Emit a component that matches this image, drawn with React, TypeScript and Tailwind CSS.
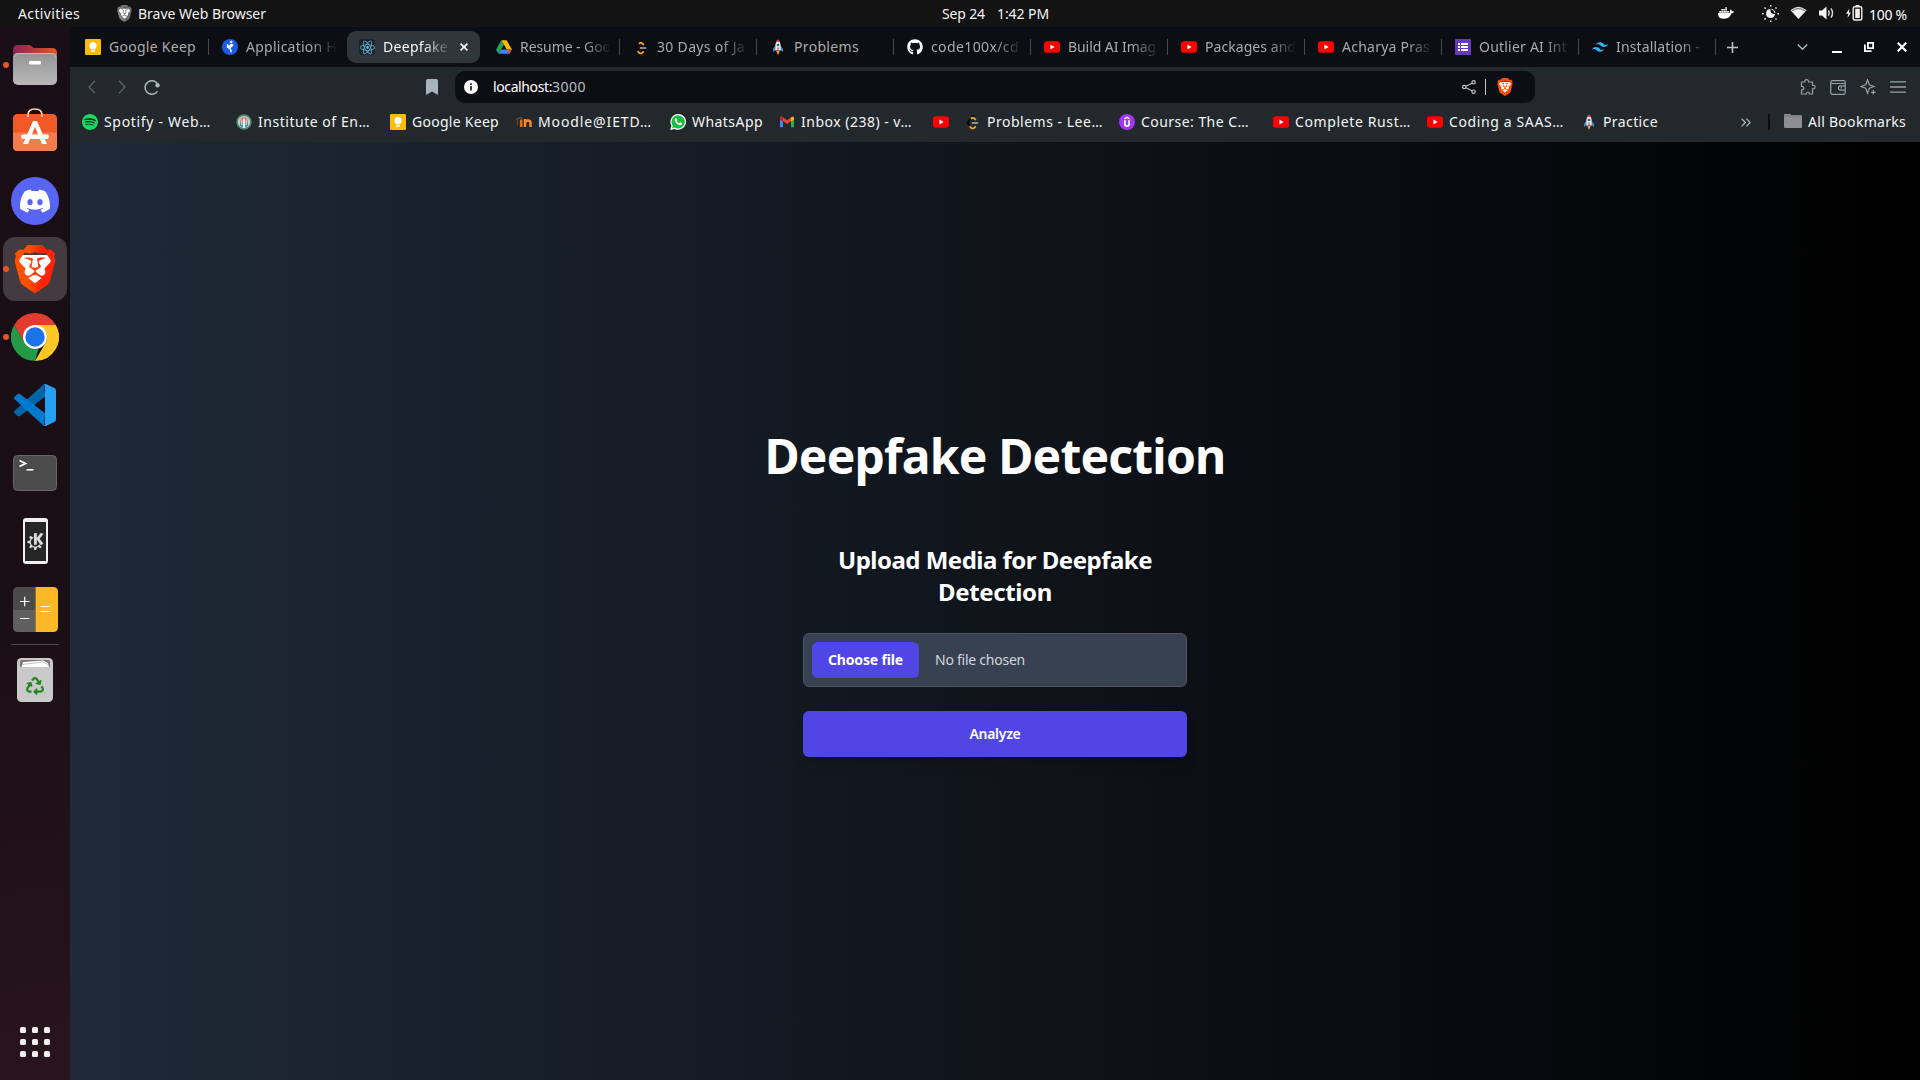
import { useLayoutEffect, useRef, type ReactNode } from "react";
import { FaGithub, FaRecycle } from "react-icons/fa";
import { SiBrave, SiDiscord, SiDocker, SiKde, SiReact, SiSpotify, SiTailwindcss, SiWhatsapp } from "react-icons/si";

/* Text whose tracking is adjusted so that it takes up exactly `w` pixels. */
function Fit({ w, children, className = "" }: { w: number; children: string; className?: string }) {
  const ref = useRef<HTMLSpanElement>(null);
  useLayoutEffect(() => {
    const el = ref.current;
    if (!el) return;
    el.style.letterSpacing = "0px";
    const natural = el.getBoundingClientRect().width;
    el.style.letterSpacing = `${(w - natural) / children.length}px`;
  }, [w, children]);
  return (
    <span ref={ref} className={`inline-block whitespace-pre ${className}`}>
      {children}
    </span>
  );
}

/* ---------- small site icons ---------- */
const Keep = () => (
  <svg width="16" height="16" viewBox="0 0 16 16">
    <rect width="16" height="16" rx="1.2" fill="#fbbc04" />
    <circle cx="8" cy="6.7" r="3.6" fill="#fff" />
    <path d="M6 8.5h4v1.8H6zM6 11.3h4v1.4H6z" fill="#fff" />
  </svg>
);
const Runner = () => (
  <svg width="16" height="16" viewBox="0 0 16 16">
    <circle cx="8" cy="8" r="8" fill="#1d5ce6" />
    <circle cx="9.3" cy="3" r="1.2" fill="#fff" />
    <path d="M9.800 5.200 6 8.300q2.800 1 3.200 5M5.600 5.200v3.600M11.200 5.500 8 8.600" fill="none" stroke="#fff" strokeWidth="1.500" />
  </svg>
);
const ReactTile = () => (
  <span className="flex size-4 items-center justify-center rounded-xs bg-[#20232a]">
    <SiReact className="size-[15px] text-[#58c4e0]" />
  </span>
);
const Drive = () => (
  <svg width="16" height="16" viewBox="0 0 16 16">
    <path d="M5.4 1.3 0 10.8l2.6 4L8 5.5z" fill="#1ea362" />
    <path d="M5.4 1.3h5.2L16 10.5h-5.2z" fill="#ffba00" />
    <path d="M5.3 10.5H16l-2.6 4.3H2.6z" fill="#4285f4" />
    <path d="m11 10.6 5 0-2.6 4.2z" fill="#ea4335" />
  </svg>
);
const Leet = () => (
  <svg width="16" height="16" viewBox="0 0 16 16" fill="none">
    <path d="M9 1 4 6.500q-1.800 2-.3 4.200l2 2" stroke="#050505" strokeWidth="1.700" />
    <path d="m5.800 4.600 1.400-.8q1.200-.2 2.300.9l1.300 1.300" stroke="#f5a31c" strokeWidth="1.800" />
    <path d="m4.600 12.200 1.700 1.700q1.400 1 2.900 0l1.600-1.500" stroke="#f5a31c" strokeWidth="1.800" />
    <path d="M6.800 9h6.400" stroke="#b3b3b3" strokeWidth="1.500" />
  </svg>
);
const Rocket = () => (
  <svg width="16" height="16" viewBox="0 0 16 16">
    <path d="M5.2 7 3 9.8V13l2.6-1.8zM10.8 7 13 9.8V13l-2.6-1.8z" fill="#3b88c3" />
    <path d="M8 .8C5.4 3 5 6 5.3 11.6h5.4C11 6 10.600 3 8 .8z" fill="#e4ebf0" />
    <path d="M8 .6c-1 .8-1.500 1.500-1.900 2.500h3.800C9.500 2.100 9 1.400 8 .6z" fill="#c8414b" />
    <circle cx="8" cy="6" r="1.300" fill="#3b5f80" />
    <path d="M7.400 8.500h1.200v4H7.400z" fill="#c8414b" />
    <path d="M6.300 12h3.400L8 16z" fill="#ffa21a" />
  </svg>
);
const YouTube = () => (
  <svg width="16" height="16" viewBox="0 0 16 16">
    <rect y="2.300" width="16" height="11.400" rx="2.800" fill="#f00" />
    <path d="M6.400 5.600v4.800L10.600 8z" fill="#fff" />
  </svg>
);
const Forms = () => (
  <svg width="16" height="16" viewBox="0 0 16 16">
    <rect width="16" height="16" rx=".8" fill="#673ab7" />
    <path d="M3 4h2v2H3zM6 4h7v2H6zM3 7h2v2H3zM6 7h7v2H6zM3 10h2v2H3zM6 10h7v2H6z" fill="#fff" />
  </svg>
);
const Crest = () => (
  <svg width="16" height="16" viewBox="0 0 16 16">
    <circle cx="8" cy="8" r="6.900" fill="#c9d3cd" stroke="#4f8a6c" strokeWidth="1.600" />
    <path d="M4.300 6.500q.4-3.300 3.700-3.300t3.700 3.300V9H4.300z" fill="#d2745f" />
    <path d="M4 8.500h8v3.300l-1.500 1.200h-5L4 11.800z" fill="#4d92b5" />
    <path d="M7.100 4.500h1.800v9H7.100z" fill="#fff" />
    <path d="M5.300 5.500h.9v5.500h-.9zM9.800 5.500h.9v5.500h-.9z" fill="#f5e9e4" />
  </svg>
);
const Moodle = () => (
  <svg width="16" height="16" viewBox="0 0 16 16" fill="none">
    <path d="M0 5.500 4 3.500l2.500 1" stroke="#4e4e4e" strokeWidth="1.500" />
    <path d="M1.500 6v5.500" stroke="#6a3d1c" strokeWidth="1.200" />
    <path d="M5.200 13V5.500" stroke="#d96f1a" strokeWidth="2.600" />
    <path d="M9 13V5M9.500 8.500q.3-2 2.500-2t2.500 2V13" stroke="#f7882f" strokeWidth="2.500" />
  </svg>
);
const Gmail = () => (
  <svg width="16" height="16" viewBox="0 0 16 16">
    <path d="M1 4v9.300h3V7z" fill="#4285f4" />
    <path d="M15 4v9.300h-3V7z" fill="#34a853" />
    <path d="M1 3.800C1 2.300 2.600 2.200 3.500 2.900L8 6.300l4.500-3.400v3.800L8 10 3.500 6.700 1 5z" fill="#ea4335" />
    <path d="M12 3.300c1-.9 3-.9 3 .9v1.300l-3 2.200z" fill="#fbbc04" />
    <path d="M1 4.200v1.300l3 2.200V3.600C3 2.400 1 2.500 1 4.200z" fill="#c5221f" />
  </svg>
);
/* White bubble, green disc and white handset. */
const WhatsApp = () => (
  <svg width="16" height="16" viewBox="0 0 16 16">
    <path d="M8.200 0A7.900 7.900 0 1 1 4.500 14.900L.2 16l1.200-4.200A7.900 7.900 0 0 1 8.200 0z" fill="#fff" />
    <path d="M8.200 1.300a6.600 6.600 0 1 1-3.500 12.200l-2.600.7.700-2.500A6.600 6.600 0 0 1 8.200 1.300z" fill="#15bf3f" />
    <path d="M5.500 4.300q.8-.5 1.200.4l.5 1.200q0 .4-.6 1 .9 1.700 2.600 2.400l.8-.9q.3-.2.600 0l1.400.7q.3.3 0 1-.6 1.300-2.200 1.100Q6.100 10.300 4.800 7q-.5-1.600.7-2.700z" fill="#fff" />
  </svg>
);
const Spotify = () => (
  <span className="flex size-4 items-center justify-center rounded-full bg-[#191c1f]">
    <SiSpotify className="size-4 text-[#1ed760]" />
  </span>
);
const Udemy = () => (
  <svg width="16" height="16" viewBox="0 0 16 16" fill="none">
    <circle cx="8" cy="8" r="8" fill="#a435f0" />
    <path d="M5.400 4.800 8 3.300l2.600 1.500" stroke="#fff" strokeWidth="1.400" />
    <path d="M5.900 6.300V10q0 2.100 2.100 2.100T10.100 10V6.300" stroke="#fff" strokeWidth="1.700" />
  </svg>
);
const BraveLogo = ({ size, id, from = "#ff5000", to = "#ff2405" }: { size: number; id: string; from?: string; to?: string }) => (
  <svg width={size} height={size} viewBox="0 0 24 24">
    <defs>
      <linearGradient id={id}>
        <stop offset=".35" stopColor={from} />
        <stop offset=".65" stopColor={to} />
      </linearGradient>
    </defs>
    <path d="M5 5h14l1.500 3-4 10L12 21l-4.500-3-4-10z" fill="#fff" />
    <SiBrave size={24} fill={`url(#${id})`} />
  </svg>
);

/* ---------- top panel ---------- */
function TopBar() {
  return (
    <header className="grid h-[27px] shrink-0 grid-cols-[942px_1fr_202px] items-center bg-[#131313] text-[14px] text-[#f2f2f2]">
      <div className="flex items-center pl-[18px]">
        <Fit w={62}>Activities</Fit>
        <span className="ml-[36px] mr-[5px] flex size-[17px] items-center justify-center">
          <BraveLogo size={17} id="bravePanel" from="#7d7d7d" to="#6a6a6a" />
        </span>
        <Fit w={128}>Brave Web Browser</Fit>
      </div>
      <div className="flex gap-[12px] pb-px leading-[25px]">
        <Fit w={43}>Sep 24</Fit>
        <Fit w={52}>1:42 PM</Fit>
      </div>
      <div className="flex items-center pb-px text-white">
        <SiDocker className="size-[16px]" />
        <svg className="ml-[28px]" width="17" height="17" viewBox="0 0 17 17" fill="#eee">
          <path d="M8.500 4A4.500 4.500 0 1 0 13 9 4 4 0 0 1 8.500 4z" />
          <path d="M9.500 4.100a4.600 4.600 0 0 1 3.500 4" fill="none" stroke="#eee" />
          <path d="M8 0h1.500v1.600H8zM8 15.400h1.500V17H8zM0 8h1.600v1.500H0zM15.400 8H17v1.500h-1.600zM2 3l1-1 1.200 1.200-1 1zM13 3l1-1 1 1-1.100 1.200zM2 14l1.200-1.200 1 1L3 15zM13 14l1-1.100L15 14l-1 1z" />
        </svg>
        <svg className="ml-[11px]" width="17" height="14" viewBox="0 0 17 14">
          <path d="M.5 4.200Q8.500-2.800 16.500 4.200L8.500 13z" fill="#f2f2f2" />
          <path d="M1.500 4.200q7-5 14 0l-1 1.100q-6-4-12 0z" fill="#8a8a8a" />
        </svg>
        <svg className="ml-[12px]" width="16" height="14" viewBox="0 0 16 14">
          <path d="M0 4.500h3L7.500.5v13L3 9.500H0z" fill="#f2f2f2" />
          <path d="M9.500 4.300q1.600 2.700 0 5.400M12 2.300q3 4.700 0 9.400" fill="none" stroke="#ddd" strokeWidth="1.400" />
        </svg>
        <svg className="ml-[11px]" width="17" height="16" viewBox="0 0 17 16">
          <path d="M3.500 3.500 0 8.700h2.300L1.500 13 5 7.500H2.800z" fill="#f2f2f2" />
          <rect x="7.200" y="1.700" width="8.600" height="13.300" rx="1.500" fill="none" stroke="#f2f2f2" strokeWidth="1.400" />
          <path d="M9.500 0h4v2h-4zM9.200 3.700h4.600V13H9.200z" fill="#f2f2f2" />
        </svg>
        <Fit w={38} className="ml-[6px] pt-[2px]">100 %</Fit>
      </div>
    </header>
  );
}

/* ---------- dock ---------- */
function DockItem({ children, active, running }: { children: ReactNode; active?: boolean; running?: boolean }) {
  return (
    <div className="relative flex h-[68px] w-[70px] items-center justify-center">
      {active && <span className="absolute inset-x-[3px] inset-y-[2px] rounded-xl bg-[#433b40]" />}
      {running && <span className="absolute left-[3px] top-[31px] size-[6px] rounded-full bg-[#e95420]" />}
      <span className="relative">{children}</span>
    </div>
  );
}

function Dock() {
  return (
    <aside className="flex w-[70px] shrink-0 flex-col bg-[linear-gradient(170deg,#190e15_0%,#1a0f15_55%,#28141d_100%)] pt-[4px]">
      <DockItem running>
        <svg width="44" height="40" viewBox="0 0 44 40">
          <defs>
            <linearGradient id="folder"><stop stopColor="#7c2a57" /><stop offset="1" stopColor="#e95420" /></linearGradient>
            <linearGradient id="folderFront" x2="0" y2="1"><stop stopColor="#949494" /><stop offset="1" stopColor="#b8b8b8" /></linearGradient>
          </defs>
          <path d="M0 5q0-5 5-5h11q2 0 3 1.500T22 3h17q5 0 5 5v12H0z" fill="url(#folder)" />
          <rect y="8" width="44" height="32" rx="5" fill="url(#folderFront)" />
          <path d="M1 12q0-3.500 4-3.500h34q4 0 4 3.500" fill="none" stroke="#c9c9c9" strokeWidth=".8" />
          <rect x="16" y="16" width="12" height="3.500" rx="1.200" fill="#fff" />
        </svg>
      </DockItem>
      <DockItem>
        <svg className="mb-[7px]" width="44" height="43" viewBox="0 0 44 43">
          <rect y="6" width="44" height="37" rx="4.500" fill="#f15a24" />
          <path d="M0 24.500h44v14q0 4.500-4.500 4.500h-35Q0 43 0 38.500z" fill="#f47b4b" />
          <path d="M15 9V7q0-6 7-6t7 6v2" fill="none" stroke="#f6d9ae" strokeWidth="1.700" />
          <path d="M20 13h4l10 23h-5l-7-17-7 17h-5z" fill="#fff" />
          <rect x="8" y="26.500" width="28" height="4.500" rx="2.200" fill="#fff" />
        </svg>
      </DockItem>
      <DockItem>
        <span className="flex size-12 items-center justify-center rounded-full bg-[#5865f2]">
          <SiDiscord className="size-[30px] text-white" />
        </span>
      </DockItem>
      <DockItem active running><BraveLogo size={48} id="braveDock" /></DockItem>
      <DockItem running>
        <svg width="48" height="48" viewBox="0 0 48 48">
          <path d="M3.200 12A24 24 0 0 1 44.800 12H24L13.600 30z" fill="#e33b2e" />
          <path d="M3.200 12 13.600 30A12 12 0 0 0 24 36h3.500l-3.500 12A24 24 0 0 1 3.200 12z" fill="#249a47" />
          <path d="M44.800 12A24 24 0 0 1 24 48L34.400 30A12 12 0 0 0 34.400 18L24 12z" fill="#fcc727" />
          <circle cx="24" cy="24" r="12" fill="#fff" />
          <circle cx="24" cy="24" r="9.700" fill="#1a73e8" />
        </svg>
      </DockItem>
      <DockItem>
        <svg width="42" height="42" viewBox="0 0 42 42">
          <path d="M31 13 6 32q-1.200.8-2.300 0L.6 29.200q-1-1.200 0-2.400L30 0z" fill="#0065a9" />
          <path d="M31 29 6 10q-1.200-.8-2.300 0L.6 12.800q-1 1.200 0 2.400L30 42z" fill="#007acc" />
          <path d="M31 13v16l-10.500-8z" fill="#1b0f16" />
          <path d="M30 0q.8-.4 1.800 0l8.500 4q1.700.8 1.700 2.500v29q0 1.700-1.700 2.500l-8.500 4q-1 .4-1.800 0l1-2V2z" fill="#23a0f3" />
        </svg>
      </DockItem>
      <DockItem>
        <svg width="44" height="36" viewBox="0 0 44 36">
          <rect x=".5" y=".5" width="43" height="35" rx="4" fill="#4b4b4b" stroke="#666" />
          <path d="m6.500 5.500 6 3-6 3" fill="none" stroke="#fff" strokeWidth="1.700" />
          <path d="M13.500 14.800h7" stroke="#fff" strokeWidth="1.600" />
        </svg>
      </DockItem>
      <DockItem>
        <span className="flex h-[46px] w-[25px] items-center justify-center rounded-[3px] bg-[#f1f1f1]">
          <span className="flex h-[39px] w-[21px] items-center justify-center bg-[#262626]">
            <SiKde className="size-[17px] text-[#dcdcdc]" />
          </span>
        </span>
      </DockItem>
      <DockItem>
        <svg width="45" height="45" viewBox="0 0 45 45">
          <path d="M22.500 0H5Q0 0 0 5v17.500h22.500z" fill="#4a4a4a" />
          <path d="M0 22.500V40q0 5 5 5h17.500V22.500z" fill="#5f5f5f" />
          <path d="M22.500 0H40q5 0 5 5v35q0 5-5 5H22.500z" fill="#fcb827" />
          <path d="M7 14.500h9.500M11.700 9.700v9.600M7 31.500h9.500M27.500 19.500h10M27.500 24.500h10" stroke="#fff" strokeWidth="1.200" />
        </svg>
      </DockItem>
      <div className="mx-[11px] mt-[1px] h-px bg-[#4c4549]" />
      <div className="flex justify-center pt-[13px]">
        <svg width="36" height="44" viewBox="0 0 36 44">
          <rect width="36" height="44" rx="4.500" fill="#c9c9c9" />
          <path d="M3 9V4q0-2 2-2h26q2 0 2 2v5z" fill="#777" />
          <path d="M4.500 9 6 4l20-1.500L31 5l1 4z" fill="#fff" />
          <path d="M5 6.500 26 4l6 3" fill="none" stroke="#aaa" strokeWidth=".7" />
          <FaRecycle x="9" y="19" size={18} color="#1e8a1e" />
        </svg>
      </div>
      <div className="mb-[23px] ml-[20px] mt-auto grid w-[30px] grid-cols-3 gap-[6px]">
        {Array.from({ length: 9 }, (_, i) => (
          <span key={i} className="size-[6px] rounded-[1.500px] bg-[#f0efef]" />
        ))}
      </div>
    </aside>
  );
}

/* ---------- browser ---------- */
const tabs: { icon: ReactNode; label: string; w: number; active?: boolean }[] = [
  { icon: <Keep />, label: "Google Keep", w: 87 },
  { icon: <Runner />, label: "Application H", w: 91 },
  { icon: <ReactTile />, label: "Deepfake", w: 65, active: true },
  { icon: <Drive />, label: "Resume - Goo", w: 91 },
  { icon: <Leet />, label: "30 Days of Ja", w: 88 },
  { icon: <Rocket />, label: "Problems", w: 65 },
  { icon: <FaGithub className="size-4 text-white" />, label: "code100x/cd", w: 88 },
  { icon: <YouTube />, label: "Build AI Imag", w: 88 },
  { icon: <YouTube />, label: "Packages and", w: 91 },
  { icon: <YouTube />, label: "Acharya Pras", w: 88 },
  { icon: <Forms />, label: "Outlier AI Int", w: 88 },
  { icon: <SiTailwindcss className="size-4 text-[#2cb7f5]" />, label: "Installation -", w: 84 },
];

function TabStrip() {
  return (
    <div className="flex h-10 shrink-0 items-center bg-[#0d0e13] pl-[2px] text-[14px] text-[#a9abad]">
      {tabs.map((t, i) => (
        <div key={t.label} className="flex h-10 w-[137px] shrink-0 items-center">
          {t.active ? (
            <div className="ml-[1px] flex h-8 w-[133px] items-center rounded-[9px] bg-[#2f373c] pl-3 text-[#f5f6f7]">
              {t.icon}
              <div className="ml-[8px] w-[65px] overflow-hidden pb-[2px] [mask-image:linear-gradient(to_right,black_62%,rgba(0,0,0,.15))]">
                <Fit w={t.w}>{t.label}</Fit>
              </div>
              <svg className="ml-[12px]" width="8" height="8" viewBox="0 0 8 8">
                <path d="m.6.600 6.800 6.800M7.400.6.600 7.400" stroke="#fff" strokeWidth="1.600" />
              </svg>
            </div>
          ) : (
            <div className="flex w-full items-center pl-[13px]">
              <span className="w-4 shrink-0">{t.icon}</span>
              <div
                className={`ml-[8px] w-[89px] shrink-0 overflow-hidden pb-[2px] ${t.w > 87 || i === 11 ? "[mask-image:linear-gradient(to_right,black_72%,rgba(0,0,0,.1))]" : ""}`}
              >
                <Fit w={t.w}>{t.label}</Fit>
              </div>
              {i !== 1 && <span className="ml-auto h-4 w-px bg-[#444c51]" />}
            </div>
          )}
        </div>
      ))}
      <div className="flex flex-1 items-center pl-[11px] pr-[13px]">
        <svg width="11" height="11" viewBox="0 0 11 11"><path d="M5.500 0v11M0 5.500h11" stroke="#c3c6c8" strokeWidth="1.500" /></svg>
        <svg className="ml-auto" width="11" height="8" viewBox="0 0 11 8"><path d="m.8 1.500 4.700 4.700 4.700-4.700" fill="none" stroke="#a9b8c0" strokeWidth="1.500" /></svg>
        <span className="ml-[24px] mt-[9px] h-[2px] w-[10px] bg-white" />
        <svg className="ml-[22px]" width="10" height="10" viewBox="0 0 10 10" fill="none" stroke="#fff" strokeWidth="1.800">
          <path d="M3.900.900h5.200v5.200H3.900zM.9 2.500v6.600h6.600" />
        </svg>
        <svg className="ml-[23px]" width="10" height="10" viewBox="0 0 10 10"><path d="m.7.700 8.600 8.600M9.300.700.7 9.300" stroke="#fff" strokeWidth="2.200" /></svg>
      </div>
    </div>
  );
}

function Toolbar() {
  return (
    <div className="flex h-10 shrink-0 items-center bg-[#22282c] pr-[14px]">
      <svg className="ml-[18px]" width="8" height="14" viewBox="0 0 8 14"><path d="M7 .7 1 7l6 6.300" fill="none" stroke="#59636a" strokeWidth="1.300" /></svg>
      <svg className="ml-[22px]" width="8" height="14" viewBox="0 0 8 14"><path d="m1 .7 6 6.300-6 6.300" fill="none" stroke="#59636a" strokeWidth="1.300" /></svg>
      <svg className="ml-[18px]" width="16" height="16" viewBox="0 0 16 16">
        <path d="M13.500 12.300A6.800 6.800 0 1 1 14.200 6" fill="none" stroke="#a9b8c0" strokeWidth="1.500" />
        <circle cx="13.500" cy="6.200" r="2.200" fill="#a9b8c0" />
      </svg>
      <svg className="ml-[266px]" width="12" height="16" viewBox="0 0 12 16"><path d="M0 2q0-2 2-2h8q2 0 2 2v14l-6-3.500L0 16z" fill="#a6b5bd" /></svg>
      <div className="ml-[17px] flex h-8 w-[1080px] items-center rounded-[10px] bg-[#0d0e13]">
        <svg className="ml-[9px]" width="14" height="14" viewBox="0 0 14 14">
          <circle cx="7" cy="7" r="7" fill="#fff" />
          <path d="M6.200 6h1.600v4.500H6.200zM6.200 3.300h1.600v1.600H6.200z" fill="#0d0e13" />
        </svg>
        <div className="ml-[15px] flex pb-[2px] text-[14px]">
          <Fit w={59} className="text-white">localhost:</Fit>
          <Fit w={34} className="text-[#b9bcbf]">3000</Fit>
        </div>
        <svg className="ml-auto" width="14" height="14" viewBox="0 0 14 14" fill="none" stroke="#c0c2c4" strokeWidth="1.200">
          <circle cx="2.300" cy="7" r="1.700" /><circle cx="11.600" cy="2.300" r="1.700" /><circle cx="11.600" cy="11.700" r="1.700" />
          <path d="m4 6.200 6-3M4 7.800l6 3" />
        </svg>
        <span className="ml-[9px] h-4 w-px bg-[#c0c2c4]" />
        <span className="ml-[10px] mr-[21px]"><BraveLogo size={18} id="braveUrl" to="#ff4800" /></span>
      </div>
      <div className="ml-auto flex items-center gap-[14px] text-[#94a3ab]">
        <svg width="16" height="16" viewBox="0 0 16 16" fill="none" stroke="currentColor" strokeWidth="1.200">
          <path d="M1.500 3h3.300q-.3-2.300 1.800-2.300T8.600 3h3.900v3.300q2.500-.4 2.500 1.700t-2.500 1.800V15H9.300q.2-2-1.400-2T6.300 15H1.500v-4q2.300 0 2.300-1.800T1.500 7.300z" />
        </svg>
        <svg width="16" height="15" viewBox="0 0 16 15" fill="none" stroke="currentColor" strokeWidth="1.200">
          <path d="M.7 2.500Q.7.700 2.500.7h11q1.700 0 1.700 1.600v10q0 2-1.700 2h-11q-1.800 0-1.800-1.800zM.7 3.500h14.500M15.200 5.800h-4.500a2.200 2.200 0 0 0 0 4.400h4.500" />
          <path d="M10.500 7.900h1.500" />
        </svg>
        <svg width="16" height="16" viewBox="0 0 16 16" fill="none" stroke="currentColor" strokeWidth="1.200">
          <path d="M7.500.8 9.300 5.700l4.800 1.800-4.800 1.800-1.800 4.900-1.800-4.900L.8 7.500l4.900-1.800z" />
          <path d="M13.300 11v4.500M11 13.300h4.500" />
        </svg>
        <svg width="16" height="12" viewBox="0 0 16 12"><path d="M0 .8h16M0 6h16M0 11.200h16" stroke="currentColor" strokeWidth="1.300" /></svg>
      </div>
    </div>
  );
}

/* `span` is the distance to the start of the next bookmark. */
const bookmarks: { icon: ReactNode; label: string; w: number; span: string }[] = [
  { icon: <Spotify />, label: "Spotify - Web…", w: 107, span: "w-[154px]" },
  { icon: <Crest />, label: "Institute of En…", w: 112, span: "w-[154px]" },
  { icon: <Keep />, label: "Google Keep", w: 87, span: "w-[126px]" },
  { icon: <Moodle />, label: "Moodle@IETD…", w: 114, span: "w-[154px]" },
  { icon: <WhatsApp />, label: "WhatsApp", w: 71, span: "w-[109px]" },
  { icon: <Gmail />, label: "Inbox (238) - v…", w: 111, span: "w-[154px]" },
  { icon: <YouTube />, label: "", w: 0, span: "w-[32px]" },
  { icon: <Leet />, label: "Problems - Lee…", w: 116, span: "w-[154px]" },
  { icon: <Udemy />, label: "Course: The C…", w: 108, span: "w-[154px]" },
  { icon: <YouTube />, label: "Complete Rust…", w: 116, span: "w-[154px]" },
  { icon: <YouTube />, label: "Coding a SAAS…", w: 115, span: "w-[154px]" },
  { icon: <Rocket />, label: "Practice", w: 55, span: "w-[160px]" },
];

function Bookmarks() {
  return (
    <div className="flex h-[35px] shrink-0 items-center bg-[#22282c] pb-[5px] pl-3 text-[14px] text-[#f3f5f6]">
      {bookmarks.map((b, i) => (
        <div key={i} className={`flex shrink-0 items-center gap-[6px] ${b.span}`}>
          <span className="w-4 shrink-0">{b.icon}</span>
          {b.label && <Fit w={b.w} className="pb-[2px]">{b.label}</Fit>}
        </div>
      ))}
      <svg width="10" height="9" viewBox="0 0 10 9"><path d="m.6.600 3.800 3.900L.6 8.400M5.400.600l3.800 3.900-3.800 3.900" fill="none" stroke="#a9b8c0" strokeWidth="1.300" /></svg>
      <span className="ml-[17px] h-4 w-[2px] bg-[#0d0e13]" />
      <svg className="mb-[2px] ml-[14px]" width="18" height="14" viewBox="0 0 18 14">
        <path d="M0 1q0-1 1-1h5l1.500 1H17q1 0 1 1v11q0 1-1 1H1q-1 0-1-1z" fill="#8e8d92" />
        <path d="M0 2h18" stroke="#6f6e73" strokeWidth=".8" />
      </svg>
      <Fit w={98} className="ml-[6px] pb-[2px]">All Bookmarks</Fit>
    </div>
  );
}

function Page() {
  return (
    <main className="flex flex-1 flex-col items-center bg-[linear-gradient(to_right,#1f2937,#000)] pt-[281px] text-white">
      <h1 className="h-[66px] text-[48px] font-bold leading-[66px]"><Fit w={461}>Deepfake Detection</Fit></h1>
      <section className="mt-[55px] flex w-96 flex-col">
        <h2 className="flex flex-col items-center text-[24px] font-bold leading-8">
          <Fit w={314}>Upload Media for Deepfake</Fit>
          <Fit w={114}>Detection</Fit>
        </h2>
        <div className="mt-[25px] flex h-[54px] items-center rounded-md border border-[#4b5563] bg-[#374151] px-2 text-[14px]">
          <button className="flex h-9 w-[107px] items-center justify-center rounded-md bg-[#4f46e5] font-bold text-white">
            <Fit w={75} className="pb-[2px]">Choose file</Fit>
          </button>
          <Fit w={90} className="ml-4 pb-[2px] text-[#d1d5db]">No file chosen</Fit>
        </div>
        <button className="mt-6 flex h-[46px] items-center justify-center rounded-md bg-[#4f46e5] text-[14px] font-semibold shadow-lg">
          <Fit w={51} className="pb-[2px]">Analyze</Fit>
        </button>
      </section>
    </main>
  );
}

export default function App() {
  return (
    <div className="flex h-[1080px] w-[1920px] flex-col overflow-hidden font-['Noto_Sans','Open_Sans',sans-serif]">
      <TopBar />
      <div className="flex flex-1">
        <Dock />
        <div className="flex flex-1 flex-col">
          <TabStrip />
          <Toolbar />
          <Bookmarks />
          <Page />
        </div>
      </div>
    </div>
  );
}
